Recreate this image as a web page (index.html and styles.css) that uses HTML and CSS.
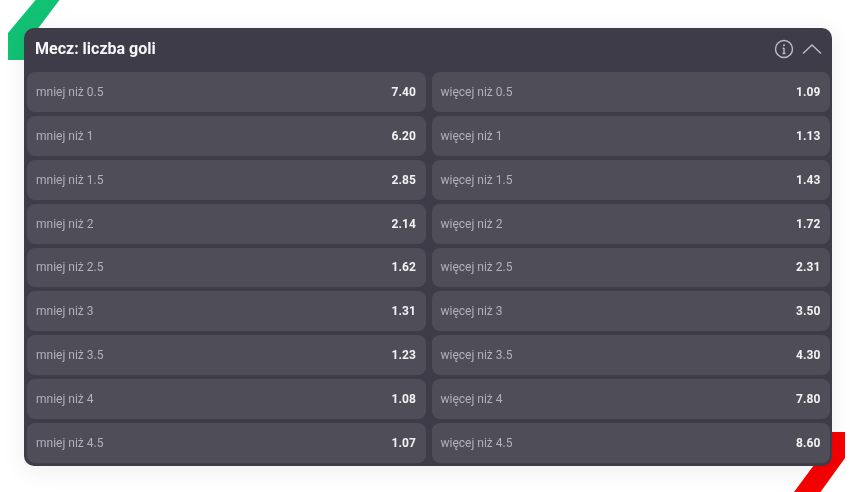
FILE: index.html
```html
<!DOCTYPE html>
<html lang="pl">
<head>
<meta charset="utf-8">
<title>Mecz: liczba goli</title>
<link rel="stylesheet" href="styles.css">
</head>
<body>
<main class="page">
  <svg class="accent accent-green" width="60" height="60" viewBox="0 0 60 60"><polygon points="35.500,0 59.500,0 24,47 24,60 8,60 8,33"/></svg>
  <svg class="accent accent-red" width="52" height="60" viewBox="0 0 52 60"><polygon points="20,0 51,0 51,26 26.500,60 0,60 20,33"/></svg>
  <section class="card">
    <header class="head">
      <h1 class="title">Mecz: liczba goli</h1>
      <div class="tools">
        <svg class="icon" width="20" height="20" viewBox="0 0 20 20"><circle cx="10" cy="10" r="8.500"/><path d="M10 9v5.500M8.600 9.300H10M8.600 14.500h2.800"/><circle class="dot" cx="10" cy="6.200" r="1"/></svg>
        <svg class="icon" width="20" height="12" viewBox="0 0 20 12"><path d="M1 10.500 10 2l9 8.500"/></svg>
      </div>
    </header>
    <div class="grid">
      <div class="row"><span class="label">mniej niż 0.5</span><b class="odd">7.40</b></div>
      <div class="row"><span class="label">więcej niż 0.5</span><b class="odd">1.09</b></div>
      <div class="row"><span class="label">mniej niż 1</span><b class="odd">6.20</b></div>
      <div class="row"><span class="label">więcej niż 1</span><b class="odd">1.13</b></div>
      <div class="row"><span class="label">mniej niż 1.5</span><b class="odd">2.85</b></div>
      <div class="row"><span class="label">więcej niż 1.5</span><b class="odd">1.43</b></div>
      <div class="row"><span class="label">mniej niż 2</span><b class="odd">2.14</b></div>
      <div class="row"><span class="label">więcej niż 2</span><b class="odd">1.72</b></div>
      <div class="row"><span class="label">mniej niż 2.5</span><b class="odd">1.62</b></div>
      <div class="row"><span class="label">więcej niż 2.5</span><b class="odd">2.31</b></div>
      <div class="row"><span class="label">mniej niż 3</span><b class="odd">1.31</b></div>
      <div class="row"><span class="label">więcej niż 3</span><b class="odd">3.50</b></div>
      <div class="row"><span class="label">mniej niż 3.5</span><b class="odd">1.23</b></div>
      <div class="row"><span class="label">więcej niż 3.5</span><b class="odd">4.30</b></div>
      <div class="row"><span class="label">mniej niż 4</span><b class="odd">1.08</b></div>
      <div class="row"><span class="label">więcej niż 4</span><b class="odd">7.80</b></div>
      <div class="row"><span class="label">mniej niż 4.5</span><b class="odd">1.07</b></div>
      <div class="row"><span class="label">więcej niż 4.5</span><b class="odd">8.60</b></div>
    </div>
  </section>
</main>
</body>
</html>
```
FILE: styles.css
```css
* { box-sizing: border-box; }
html, body { margin: 0; background: #fff; }
body { width: 858px; height: 492px; overflow: hidden; font-family: Roboto, "Liberation Sans", sans-serif; }
.page { position: relative; width: 858px; height: 492px; padding: 28px 26px 26px 24px; }
.accent { position: absolute; display: block; }
.accent-green { left: 0; top: 0; fill: #12c274; }
.accent-red { left: 794px; top: 432px; fill: #f60000; }
.card {
  position: relative;
  height: 438px;
  background: #3e3c48;
  border-radius: 10px;
  box-shadow: 0 4px 24px rgba(0,0,0,.08);
  overflow: hidden;
}
.head { height: 44px; padding: 0 10px 4px 11px; display: flex; align-items: center; justify-content: space-between; }
.title { margin: 0; font-size: 16px; font-weight: 700; color: #f7f7f8; filter: blur(.4px); }
.tools { display: flex; align-items: center; gap: 8px; margin-top: 2px; }
.icon { display: block; fill: none; stroke: #bdbcc2; stroke-width: 1.4; filter: blur(.3px); }
.icon .dot { fill: #bdbcc2; stroke: none; }
.grid { display: grid; grid-template-columns: 398.5px 398.5px; grid-auto-rows: 39.875px; gap: 4px 6px; padding: 0 3px; }
.row {
  display: flex; align-items: center; justify-content: space-between;
  padding: 0 9.500px 0 9px;
  background: #4f4d58;
  border-radius: 8px;
  font-size: 12px;
}
.label { color: #b2b1b7; filter: blur(.4px); }
.odd { color: #f2f2f3; font-weight: 700; filter: blur(.4px); letter-spacing: .1px; }
```
